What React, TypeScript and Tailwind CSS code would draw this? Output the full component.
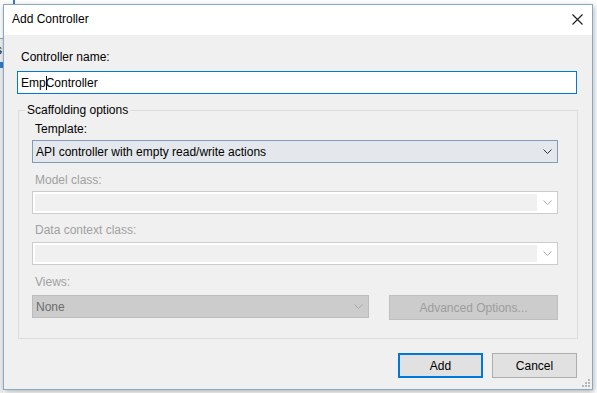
import React from "react";

// small chevron used by the combo boxes
function Chevron({ color }: { color: string }) {
  return (
    <svg width="9" height="5" viewBox="0 0 9 5" className="block">
      <path d="M0.5 0.5 L4.5 4.5 L8.5 0.5" fill="none" stroke={color} strokeWidth="1" />
    </svg>
  );
}

function DisabledCombo() {
  return (
    <div className="flex h-[23px] w-[526px] border border-[#cccccc] bg-white">
      <div className="my-[2px] ml-[2px] flex-1 bg-[#f0f0f0]" />
      <div className="flex w-[20px] items-center justify-center">
        <Chevron color="#a8a8a8" />
      </div>
    </div>
  );
}

export default function App() {
  return (
    <div className="relative h-[393px] w-[597px] overflow-hidden bg-white font-['Liberation_Sans',Arial,sans-serif] text-[12px] leading-4 text-black">
      {/* bits of the desktop behind the dialog */}
      <div className="absolute left-[13px] top-0 h-[4px] w-[2px] bg-[#3b78c5]" />
      <div className="absolute left-0 top-[38px] h-[355px] w-[3px] bg-[#f0f0f0]" />
      <div className="absolute left-0 top-[38px] h-px w-[3px] bg-[#a0a0a0]" />
      <div className="absolute left-[-4px] top-[42px] text-[12px] leading-4">s</div>
      <div className="absolute left-0 top-[62px] h-[6px] w-[3px] bg-[#3579d0]" />

      <div className="pl-[3px] pt-[4px]">
        <div className="relative flex h-[386px] w-[590px] flex-col border border-[#86a9c8] shadow-[1px_2px_6px_rgba(0,0,0,0.3)]">
          {/* title bar */}
          <div className="flex h-[30px] items-start justify-between bg-white">
            <div className="pl-[8px] pt-[6px]">Add Controller</div>
            <svg width="11" height="11" viewBox="0 0 11 11" className="mr-[9px] mt-[9px]">
              <path d="M0.5 0.5 L10.5 10.5 M10.5 0.5 L0.5 10.5" stroke="#1a1a1a" strokeWidth="1.1" />
            </svg>
          </div>

          {/* body */}
          <div className="flex-1 bg-[#f0f0f0] px-[13px] pt-[14px]">
            <div className="pl-[4px]">Controller name:</div>
            <div className="mt-[6px] flex h-[23px] w-[560px] items-center border border-[#0078d7] bg-white pl-[3px]">
              <span>Emp</span>
              <span className="inline-block h-[14px] w-px bg-black" />
              <span className="-ml-px">Controller</span>
            </div>

            <fieldset className="ml-px mt-[8px] w-[560px] border border-[#dcdcdc] pb-[18px] pl-[13px] pr-[19px] pt-[3px]">
              <legend className="-ml-[7px] px-[2px]">Scaffolding options</legend>

              <div className="pl-[3px]">Template:</div>
              <div className="mt-[3px] flex h-[23px] w-[526px] items-center justify-between border border-[#7f9dbb] bg-[#e4e8ec] pl-[3px] pr-[5px]">
                <span>API controller with empty read/write actions</span>
                <Chevron color="#333333" />
              </div>

              <div className="mt-[9px] pl-[3px] text-[#a0a0a0]">Model class:</div>
              <div className="mt-[3px]">
                <DisabledCombo />
              </div>

              <div className="mt-[8px] pl-[3px] text-[#a0a0a0]">Data context class:</div>
              <div className="mt-[4px]">
                <DisabledCombo />
              </div>

              <div className="mt-[9px] pl-[3px] text-[#a0a0a0]">Views:</div>
              <div className="mt-[5px] flex w-[526px] items-start">
                <div className="flex h-[23px] w-[337px] items-center justify-between border border-[#bcbcbc] bg-[#cccccc] pl-[3px] pr-[5px] text-[#6d6d6d]">
                  <span>None</span>
                  <Chevron color="#a8a8a8" />
                </div>
                <div className="ml-auto flex h-[25px] w-[169px] items-center justify-center border border-[#bfbfbf] bg-[#cccccc] text-[#9d9d9d]">
                  Advanced Options...
                </div>
              </div>
            </fieldset>

            <div className="mt-[14px] flex justify-end gap-[9px] pr-[2px]">
              <div className="flex h-[25px] w-[85px] items-center justify-center border-2 border-[#0078d7] bg-[#e1e1e1]">
                Add
              </div>
              <div className="flex h-[25px] w-[85px] items-center justify-center border border-[#adadad] bg-[#e1e1e1]">
                Cancel
              </div>
            </div>
          </div>

          {/* size grip */}
          <svg width="9" height="9" viewBox="0 0 9 9" className="absolute bottom-[2px] right-[2px]">
            <rect x="7" y="1" width="2" height="2" fill="#b8b8b8" />
            <rect x="4" y="4" width="2" height="2" fill="#b8b8b8" />
            <rect x="7" y="4" width="2" height="2" fill="#b8b8b8" />
            <rect x="1" y="7" width="2" height="2" fill="#b8b8b8" />
            <rect x="4" y="7" width="2" height="2" fill="#b8b8b8" />
            <rect x="7" y="7" width="2" height="2" fill="#b8b8b8" />
          </svg>
        </div>
      </div>
    </div>
  );
}
